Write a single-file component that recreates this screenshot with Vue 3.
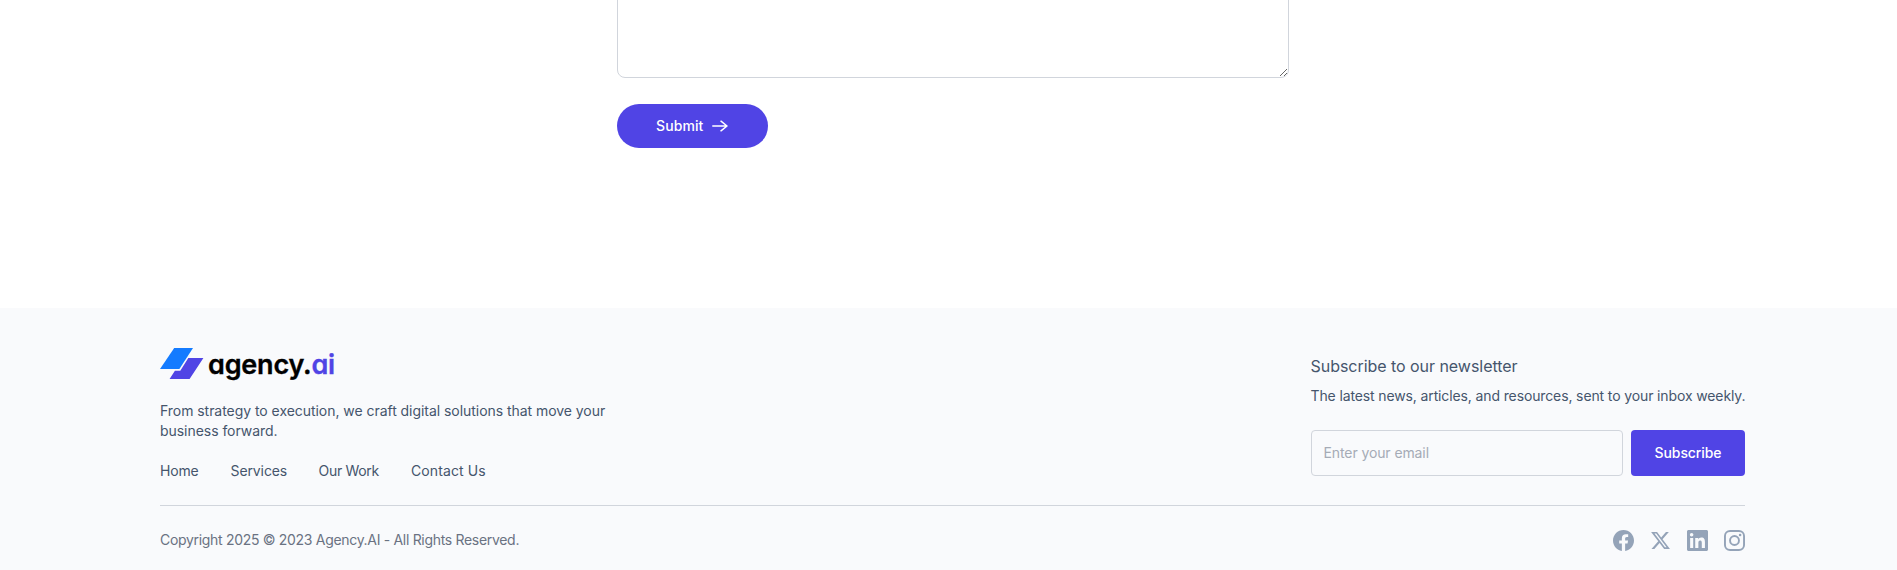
<script setup>
const links = [
  { label: 'Home', cls: 'home' },
  { label: 'Services', cls: 'services' },
  { label: 'Our Work', cls: 'work' },
  { label: 'Contact Us', cls: 'contact' },
]
</script>

<template>
  <div class="page">
    <form class="contact-form" @submit.prevent>
      <textarea class="message" aria-label="Message"></textarea>
      <button class="submit" type="submit">
        <span class="submit-label">Submit</span>
        <svg width="16" height="12" viewBox="0 0 16 12" fill="none" stroke="#fff" stroke-width="1.5" stroke-linecap="round" stroke-linejoin="round">
          <path d="M.8 6h14.2M9 1.2 15 6 9 10.8" />
        </svg>
      </button>
    </form>

    <footer class="footer">
      <div class="top">
        <div class="brand">
          <div class="logo">
            <svg width="44" height="32" viewBox="0 0 44 32">
              <path d="M14.2 0H33L19.4 21H0z" fill="#147bff" />
              <path d="M28.3 10H43.4L29.6 31H9.6l5.3-8.3h5.4z" fill="#5044e5" />
            </svg>
            <span class="wordmark">agency.<b>ai</b></span>
          </div>
          <p class="tagline">From strategy to execution, we craft digital solutions that move your<br>business forward.</p>
          <nav class="links">
            <a v-for="l in links" :key="l.label" :class="l.cls">{{ l.label }}</a>
          </nav>
        </div>
        <div class="news">
          <h3>Subscribe to our newsletter</h3>
          <p>The latest news, articles, and resources, sent to your inbox weekly.</p>
          <div class="row">
            <input type="email" placeholder="Enter your email">
            <button><span>Subscribe</span></button>
          </div>
        </div>
      </div>
      <div class="bottom">
        <p class="copyright">Copyright 2025 © 2023 Agency.AI - All Rights Reserved.</p>
        <div class="social">
          <svg width="21" height="21" viewBox="0 0 24 24" fill="#94a3b8"><path d="M24 12.07C24 5.4 18.63 0 12 0S0 5.4 0 12.07C0 18.1 4.39 23.1 10.13 24v-8.44H7.08v-3.49h3.05V9.41c0-3.02 1.79-4.69 4.53-4.69 1.31 0 2.68.24 2.68.24v2.97h-1.51c-1.49 0-1.96.93-1.96 1.89v2.25h3.33l-.53 3.49h-2.8V24C19.61 23.1 24 18.1 24 12.07z" /></svg>
          <svg width="21" height="21" viewBox="0 0 24 24" fill="#94a3b8"><path d="M18.24 2.25h3.31l-7.23 8.26 8.5 11.24h-6.66l-5.21-6.82-5.97 6.82H1.67l7.73-8.84L1.25 2.25h6.83l4.71 6.23zm-1.16 17.52h1.83L7.08 4.13H5.12z" /></svg>
          <svg width="21" height="21" viewBox="0 0 24 24" fill="#94a3b8"><path d="M22.2 0H1.8C.8 0 0 .8 0 1.8v20.4c0 1 .8 1.8 1.8 1.8h20.4c1 0 1.8-.8 1.8-1.8V1.8c0-1-.8-1.8-1.8-1.8zM7.1 20.5H3.6V9h3.5zM5.3 7.4a2.05 2.05 0 1 1 0-4.1 2.05 2.05 0 0 1 0 4.1zm15.2 13.1h-3.6v-5.6c0-1.3 0-3-1.8-3s-2.1 1.4-2.1 2.9v5.7H9.4V9h3.4v1.6h.1c.5-.9 1.6-1.9 3.4-1.9 3.6 0 4.2 2.4 4.2 5.5z" /></svg>
          <svg width="21" height="21" viewBox="0 0 24 24" fill="none" stroke="#94a3b8" stroke-width="2.2"><rect x="1.1" y="1.1" width="21.8" height="21.8" rx="5.8" /><circle cx="12" cy="12" r="5.1" /><circle cx="18.4" cy="5.6" r="1.45" fill="#94a3b8" stroke="none" /></svg>
        </div>
      </div>
    </footer>
  </div>
</template>

<style>
body { margin: 0; background: #fff; }
</style>

<style scoped>
.page { height: 570px; overflow: hidden; font-family: Inter, "Liberation Sans", sans-serif; font-size: 14px; line-height: 20px; }
.page * { box-sizing: border-box; }
p, h3 { margin: 0; font-weight: 400; white-space: nowrap; }
button { border: 0; background: #5044e5; color: #fff; font: inherit; font-weight: 500; display: flex; align-items: center; }
.contact-form { height: 308px; width: 672px; margin-left: 617px; display: flex; flex-direction: column; align-items: flex-start; }
.message { width: 672px; height: 98px; margin-top: -20px; flex: none; border: 1px solid #d1d5dc; border-radius: 8px; background: #fff; resize: vertical; outline: none; }
.submit { margin-top: 26px; width: 151px; height: 44px; border-radius: 22px; padding: 0 0 0 39px; gap: 9px; }
.submit-label { width: 47px; text-align: left; letter-spacing: .1px; }
.footer { height: 262px; background: #f9fafc; padding: 40px 152px 0 160px; color: #45556c; }
.top { height: 158px; border-bottom: 1px solid #d1d5dc; display: flex; justify-content: space-between; }
.logo { display: flex; height: 34px; gap: 4px; align-items: flex-start; }
.wordmark { font-size: 27px; line-height: 34px; font-weight: 600; color: #000; font-feature-settings: "cv11" 1; letter-spacing: -.2px; -webkit-text-stroke: .35px currentColor; }
.wordmark b { font-weight: 600; color: #5044e5; }
.tagline { margin-top: 19px; letter-spacing: -.045px; }
.links { display: flex; margin-top: 20px; white-space: nowrap; }
.home { width: 70.5px; letter-spacing: -.2px; }
.services { width: 88px; letter-spacing: -.1px; }
.work { width: 92.5px; letter-spacing: -.3px; }
.contact { letter-spacing: .1px; }
.news { width: 434.5px; padding-top: 6px; }
h3 { font-size: 16px; line-height: 24px; letter-spacing: -.04px; }
.news p { margin-top: 8px; letter-spacing: -.125px; }
.row { display: flex; gap: 8px; margin-top: 24px; }
.row input { width: 312.5px; height: 46px; border: 1px solid #d1d5dc; border-radius: 4px; background: transparent; padding: 0 12px 2px; font: inherit; letter-spacing: -.1px; outline: none; }
.row input::placeholder { color: #a5abb6; }
.row button { width: 114px; border-radius: 4px; justify-content: center; padding: 0; letter-spacing: -.1px; }
.bottom { display: flex; justify-content: space-between; padding-top: 24px; color: #6a7282; }
.copyright { letter-spacing: -.31px; }
.social { display: flex; gap: 16px; }
</style>
